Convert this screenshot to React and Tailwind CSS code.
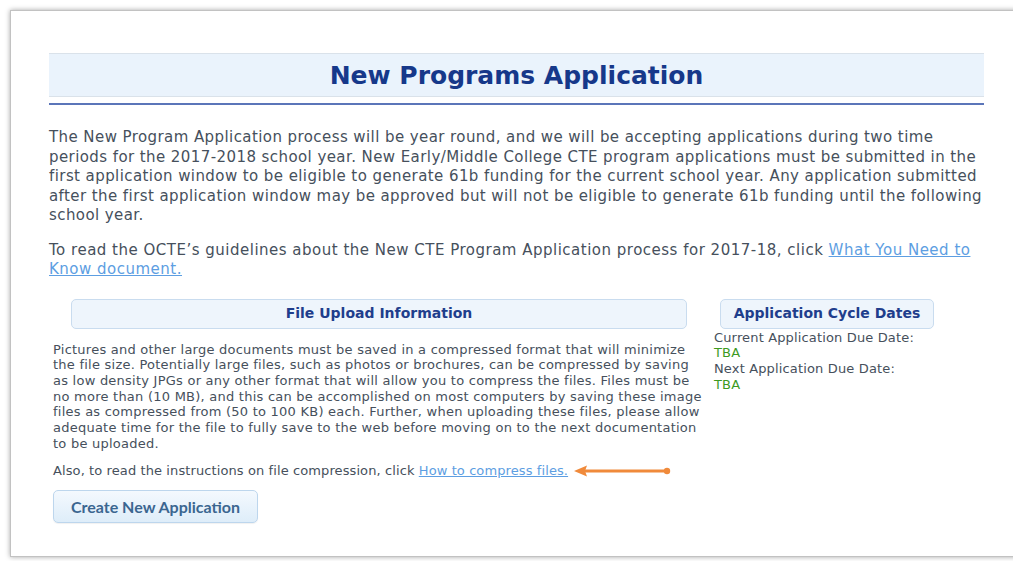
import React from 'react'

// little orange pointer that sits after the compression link
const PointerArrow = () => (
    <svg width="98" height="14" viewBox="0 0 98 14" className="inline-block align-middle ml-[6px] -mt-[2px]">
        <line x1="8" y1="7" x2="92" y2="7" stroke="#f08a3b" strokeWidth="3" strokeLinecap="round" />
        <polygon points="0,7 13,1.5 11,7 13,12.5" fill="#f08a3b" />
        <circle cx="93" cy="7" r="3.2" fill="#f08a3b" />
    </svg>
)

const InfoHeading = ({ children, className = '' }) => (
    <div className={`h-[30px] rounded-[5px] border border-[#c9dcef] bg-[#eef5fc] flex items-center justify-center text-[14px] font-bold text-[#1f3e8c] ${className}`}>
        {children}
    </div>
)

export default function App() {
    return (
        <div className="w-[1013px] h-[561px] overflow-hidden bg-white font-['DejaVu_Sans','Liberation_Sans',sans-serif]">
            <div className="ml-[10px] mt-[10px] w-[1040px] h-[547px] border border-[#c2c2c2] bg-white shadow-[0_0_5px_rgba(0,0,0,0.35)] pt-[42px] pl-[38px]">
                <div className="w-[935px]">
                    {/* Page header */}
                    <div className="h-[44px] border-y border-[#dae2ea] bg-[#eaf3fc] flex items-center justify-center">
                        <h1 className="text-[25px] font-bold text-[#16388a] leading-none">New Programs Application</h1>
                    </div>
                    <div className="mt-[6px] h-[2px] bg-[#5b75b9]" />

                    <p className="mt-[23px] text-[15px] leading-[19.5px] tracking-[0.42px] text-[#46505c] whitespace-nowrap">
                        The New Program Application process will be year round, and we will be accepting applications during two time<br />
                        periods for the 2017-2018 school year. New Early/Middle College CTE program applications must be submitted in the<br />
                        first application window to be eligible to generate 61b funding for the current school year. Any application submitted<br />
                        after the first application window may be approved but will not be eligible to generate 61b funding until the following<br />
                        school year.
                    </p>

                    <p className="mt-[15px] text-[15px] leading-[19.5px] tracking-[0.5px] text-[#46505c] whitespace-nowrap">
                        To read the OCTE’s guidelines about the New CTE Program Application process for 2017-18, click{' '}
                        <a href="#" className="text-[#5d9ee2] underline">What You Need to</a><br />
                        <a href="#" className="text-[#5d9ee2] underline">Know document.</a>
                    </p>

                    <div className="mt-[19px] pl-[4px] flex">
                        {/* File upload notes */}
                        <div className="w-[652px]">
                            <InfoHeading className="mx-[18px]">File Upload Information</InfoHeading>
                            <p className="mt-[13px] text-[13px] leading-[15.7px] tracking-[0.24px] text-[#46505c] whitespace-nowrap">
                                Pictures and other large documents must be saved in a compressed format that will minimize<br />
                                the file size. Potentially large files, such as photos or brochures, can be compressed by saving<br />
                                as low density JPGs or any other format that will allow you to compress the files. Files must be<br />
                                no more than (10 MB), and this can be accomplished on most computers by saving these image<br />
                                files as compressed from (50 to 100 KB) each. Further, when uploading these files, please allow<br />
                                adequate time for the file to fully save to the web before moving on to the next documentation<br />
                                to be uploaded.
                            </p>
                            <p className="mt-[12px] text-[13px] leading-[15.7px] tracking-[0.1px] text-[#46505c] whitespace-nowrap">
                                Also, to read the instructions on file compression, click{' '}
                                <a href="#" className="text-[#5d9ee2] underline">How to compress files.</a>
                                <PointerArrow />
                            </p>
                            <button className="mt-[11px] h-[33px] w-[205px] rounded-[5px] border border-[#bdd6ed] bg-gradient-to-b from-[#f4f9fe] to-[#deedf9] text-[16px] font-bold text-[#3b6690] font-['Lato',sans-serif] shadow-[0_1px_1px_rgba(0,0,0,0.06)]">
                                Create New Application
                            </button>
                        </div>

                        {/* Cycle dates */}
                        <div className="ml-[9px]">
                            <InfoHeading className="ml-[6px] w-[214px]">Application Cycle Dates</InfoHeading>
                            <div className="mt-[1px] text-[13px] leading-[15.7px] tracking-[0.15px] text-[#46505c] whitespace-nowrap">
                                <div>Current Application Due Date:</div>
                                <div className="text-[#3d9a1f]">TBA</div>
                                <div>Next Application Due Date:</div>
                                <div className="text-[#3d9a1f]">TBA</div>
                            </div>
                        </div>
                    </div>
                </div>
            </div>
        </div>
    )
}
